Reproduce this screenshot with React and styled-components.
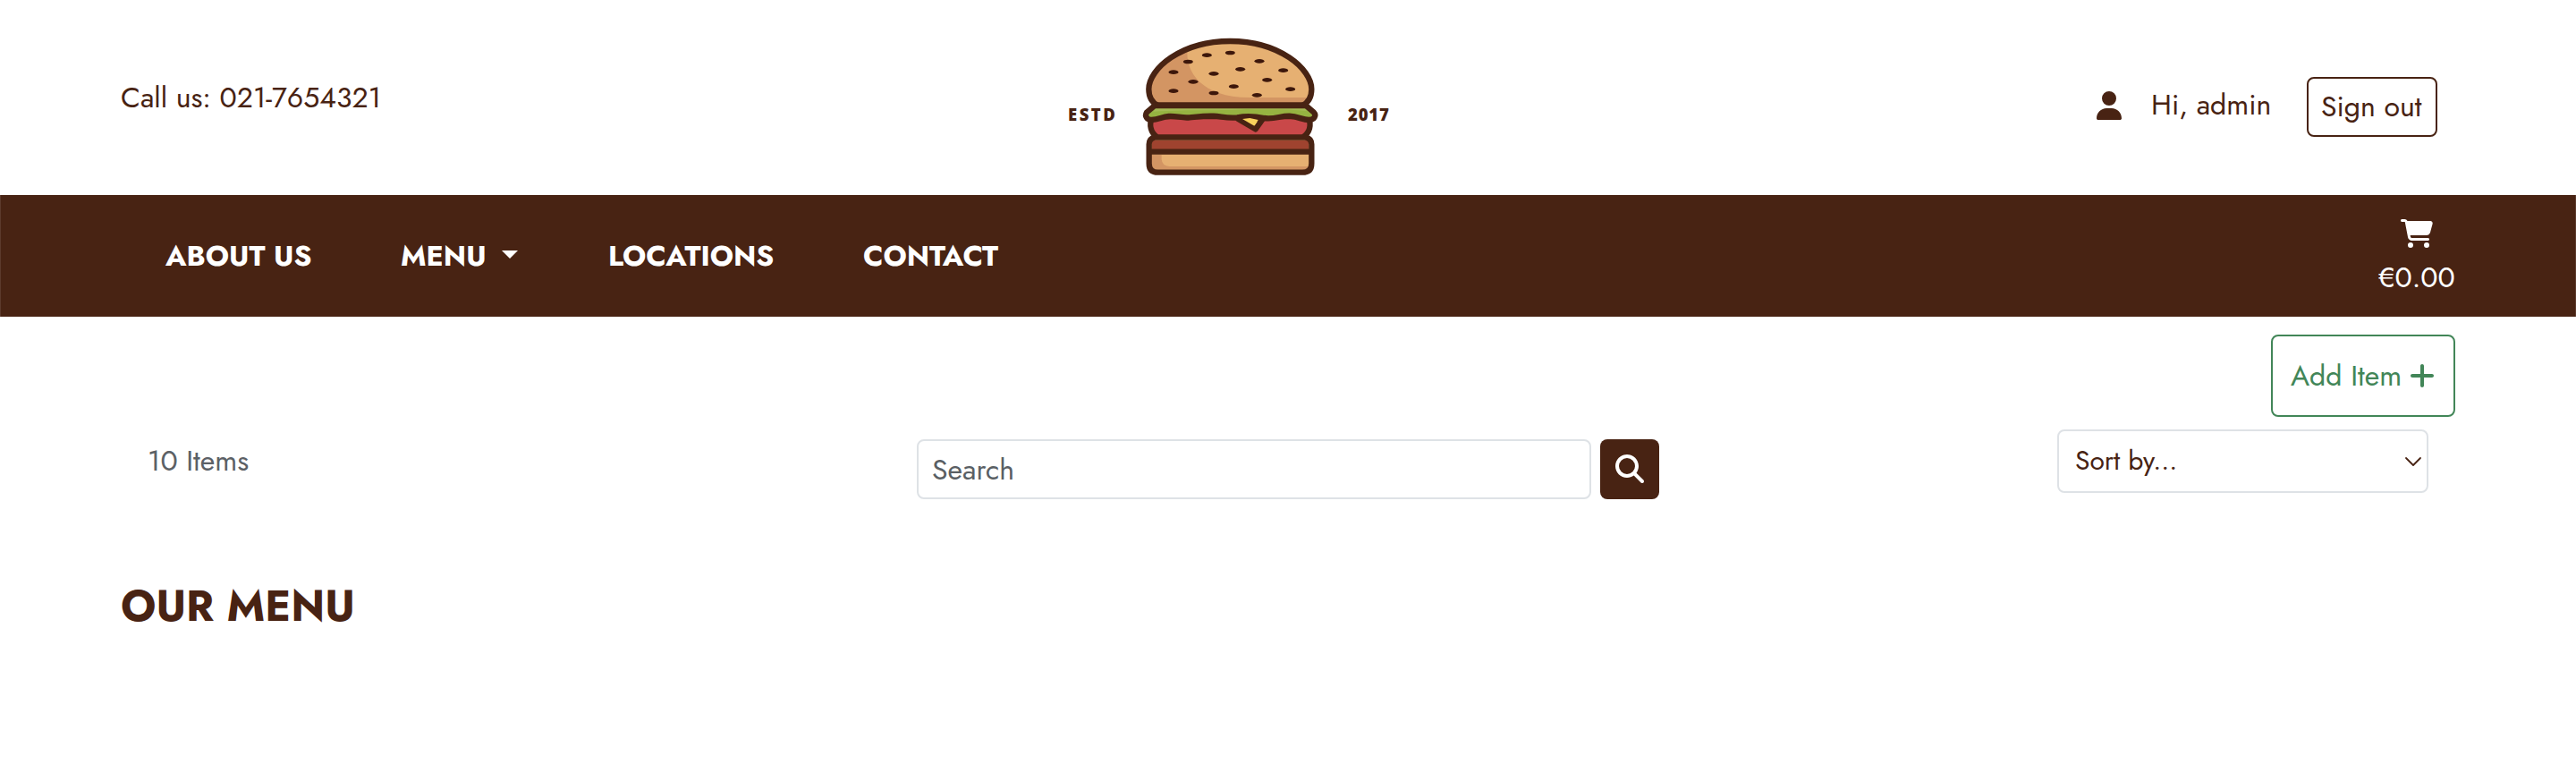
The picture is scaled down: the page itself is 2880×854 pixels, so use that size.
import React from "react";
import styled, { createGlobalStyle } from "styled-components";
import { FaUser, FaCartShopping, FaPlus, FaMagnifyingGlass } from "react-icons/fa6";

const BROWN = "#482313";

const GlobalStyle = createGlobalStyle`
  * { box-sizing: border-box; }
  body {
    margin: 0;
    background: #fff;
    color: ${BROWN};
    font: 400 32px/48px Jost, Lato, "Liberation Sans", sans-serif;
  }
  svg { display: block; flex: none; }
`;

const Label = styled.span`
  display: block;
  white-space: nowrap;
`;

const Header = styled.header`
  display: grid;
  grid-template-columns: 1059px 360px 1fr;
  height: 218px;
  padding: 0 155px 0 135px;
`;
const Phone = styled.div`
  padding-top: 85px;
`;
const Logo = styled.a`
  display: flex;
  align-items: flex-start;
  padding-top: 40px;
  color: ${BROWN};
`;
const LogoWord = styled.span`
  flex: none;
  width: 82px;
  padding: 76px 0 0 ${(p) => p.$indent || 0}px;
  font: 800 18.5px/24px "Open Sans", sans-serif;
  letter-spacing: ${(p) => p.$track}px;
  white-space: nowrap;
`;
const Account = styled.div`
  display: flex;
  justify-content: flex-end;
  align-items: flex-start;
  padding-top: 86px;
`;
const UserIcon = styled(FaUser)`
  width: 28px;
  height: 32px;
  margin: 16px 33px 0 0;
`;
const Greeting = styled.div`
  width: 174px;
  padding-top: 7px;
`;
const SignOut = styled.button`
  width: 146px;
  height: 67px;
  padding: 0 0 2px 14px;
  border: 2px solid ${BROWN};
  border-radius: 8px;
  background: transparent;
  color: inherit;
  font: inherit;
  text-align: left;
`;

const Nav = styled.nav`
  display: flex;
  align-items: flex-start;
  height: 136px;
  padding: 0 134px 0 184px;
  border: solid #5c3a2c;
  border-width: 0 1px;
  background: ${BROWN};
  color: #fff;
`;
const NavLink = styled.a`
  display: flex;
  flex: none;
  width: ${(p) => p.$width}px;
  padding-top: 44px;
  font-weight: 700;
`;
const Caret = styled.i`
  margin: 18px 0 0 17px;
  height: 9px;
  border: 9px solid transparent;
  border-top-color: #fff;
  border-bottom: 0;
`;
const Cart = styled.a`
  display: flex;
  flex-direction: column;
  width: 86px;
  margin-left: auto;
  padding-top: 27px;
`;
const CartIcon = styled(FaCartShopping)`
  width: 36px;
  height: 32px;
  margin: 0 0 9px 25px;
`;

const Actions = styled.div`
  display: flex;
  justify-content: flex-end;
  padding: 20px 135px 0;
`;
const AddItem = styled.button`
  display: flex;
  align-items: center;
  width: 206px;
  height: 92px;
  padding: 0 0 0 20px;
  border: 2px solid #428658;
  border-radius: 8px;
  background: transparent;
  color: #428658;
  font: inherit;
  text-align: left;
`;
const AddLabel = styled.div`
  width: 131px;
`;

const Toolbar = styled.div`
  display: grid;
  grid-template-columns: 860px 754px 10px 66px 445px 415px;
  align-items: start;
  padding: 14px 0 0 165px;
`;
const Count = styled.div`
  padding-top: 11px;
  color: #5c6166;
`;
const SearchField = styled.div`
  height: 67px;
  margin-top: 11px;
  padding: 8px 15px;
  border: 2px solid #dee2e6;
  border-radius: 8px;
  color: #5a5f64;
`;
const SearchButton = styled.button`
  display: grid;
  place-items: center;
  grid-column: 4;
  height: 67px;
  margin-top: 11px;
  padding: 0 0 1px;
  border: 0;
  border-radius: 8px;
  background: ${BROWN};
  color: #fff;
`;
const Sort = styled.div`
  display: flex;
  justify-content: space-between;
  grid-column: 6;
  height: 71px;
  padding: 9px 5px 0 18px;
  border: 2px solid #dee2e6;
  border-radius: 8px;
  font-size: 30px;
`;
const Chevron = styled.svg`
  margin-top: 19px;
`;
const Title = styled.h2`
  margin: 91px 0 0 135px;
  font-size: 48px;
  line-height: 58px;
  font-weight: 700;
`;

const seeds = [
  [586, 87], [508, 95], [445, 117], [684, 115], [396, 152], [531, 157], [620, 142], [764, 146],
  [462, 184], [710, 178], [598, 200], [788, 209], [396, 215], [531, 222], [676, 229],
];

function Burger() {
  return (
    <svg width="200" height="160" viewBox="288 30 600 480" fill="none" strokeLinejoin="round">
      <path d="M345 265C320 252 313 230 313 209C313 142 420 48 586 48S859 142 859 209C859 230 852 252 827 265Z" fill="#e6b072" />
      <path d="M443 75C434 150 490 237 650 237H855L830 262H345C320 252 313 230 313 209C315 165 365 105 443 75Z" fill="#d39563" />
      <path d="M345 265C320 252 313 230 313 209C313 142 420 48 586 48S859 142 859 209C859 230 852 252 827 265Z" stroke={BROWN} strokeWidth="19" />
      {seeds.map(([x, y]) => (
        <ellipse key={`${x}-${y}`} cx={x} cy={y} rx="16.5" ry="7" fill="#3d170b" />
      ))}
      <path d="M325 300C312 330 320 355 342 371H829C853 355 860 330 848 300Z" fill="#c94849" stroke={BROWN} strokeWidth="19" />
      <path d="M612 308L671 343L696 308Z" fill="#f9d25c" stroke={BROWN} strokeWidth="19" />
      <path d="M335 262L306 287C298 300 308 313 322 312C347 312 355 302 380 300C405 298 425 307 450 304C480 301 500 298 530 299C560 301 575 307 610 304C640 298 670 300 700 306C735 311 755 298 785 299C815 301 828 312 850 312C868 312 877 298 866 286L838 262Z" fill="#96b341" stroke={BROWN} strokeWidth="19" />
      <path d="M340 270H833L843 282C760 274 700 280 640 276C560 283 460 276 328 284Z" fill="#a4bb55" />
      <path d="M627 309L652 306L680 312L667 332Z" fill="#f9d25c" />
      <path d="M333 371H839Q859 375 859 394V458Q859 488 828 488H344Q314 488 314 458V394Q314 375 333 371Z" fill="#e6b072" />
      <path d="M323 429H356V445Q358 467 382 468H849Q844 479 828 479H344Q323 479 323 458Z" fill="#d39563" />
      <path d="M323 381H849V419H323Z" fill="#9f432f" />
      <path d="M333 371H839Q859 375 859 394V458Q859 488 828 488H344Q314 488 314 458V394Q314 375 333 371ZM314 419H859" stroke={BROWN} strokeWidth="19" />
      <path d="M335 265H838" stroke={BROWN} strokeWidth="17" />
    </svg>
  );
}

export default function App() {
  return (
    <>
      <GlobalStyle />
      <Header>
        <Phone><Label>Call us: 021-7654321</Label></Phone>
        <Logo>
          <LogoWord $track={2.5}>ESTD</LogoWord>
          <Burger />
          <LogoWord $indent={31} $track={0.8}>2017</LogoWord>
        </Logo>
        <Account>
          <UserIcon />
          <Greeting><Label>Hi, admin</Label></Greeting>
          <SignOut><Label>Sign out</Label></SignOut>
        </Account>
      </Header>
      <Nav>
        <NavLink $width={263}><Label>ABOUT US</Label></NavLink>
        <NavLink $width={232}><Label>MENU</Label><Caret /></NavLink>
        <NavLink $width={285}><Label>LOCATIONS</Label></NavLink>
        <NavLink $width={160}><Label>CONTACT</Label></NavLink>
        <Cart>
          <CartIcon />
          <Label>€0.00</Label>
        </Cart>
      </Nav>
      <Actions>
        <AddItem><AddLabel><Label>Add Item</Label></AddLabel><FaPlus size={32} /></AddItem>
      </Actions>
      <Toolbar>
        <Count><Label>10 Items</Label></Count>
        <SearchField><Label>Search</Label></SearchField>
        <SearchButton aria-label="Search"><FaMagnifyingGlass size={32} /></SearchButton>
        <Sort>
          <Label>Sort by...</Label>
          <Chevron width="20" height="12" viewBox="0 0 20 12" fill="none" stroke={BROWN} strokeWidth="1.8" strokeLinecap="round" strokeLinejoin="round">
            <path d="M2 2L10 10L18 2" />
          </Chevron>
        </Sort>
      </Toolbar>
      <Title><Label>OUR MENU</Label></Title>
    </>
  );
}
